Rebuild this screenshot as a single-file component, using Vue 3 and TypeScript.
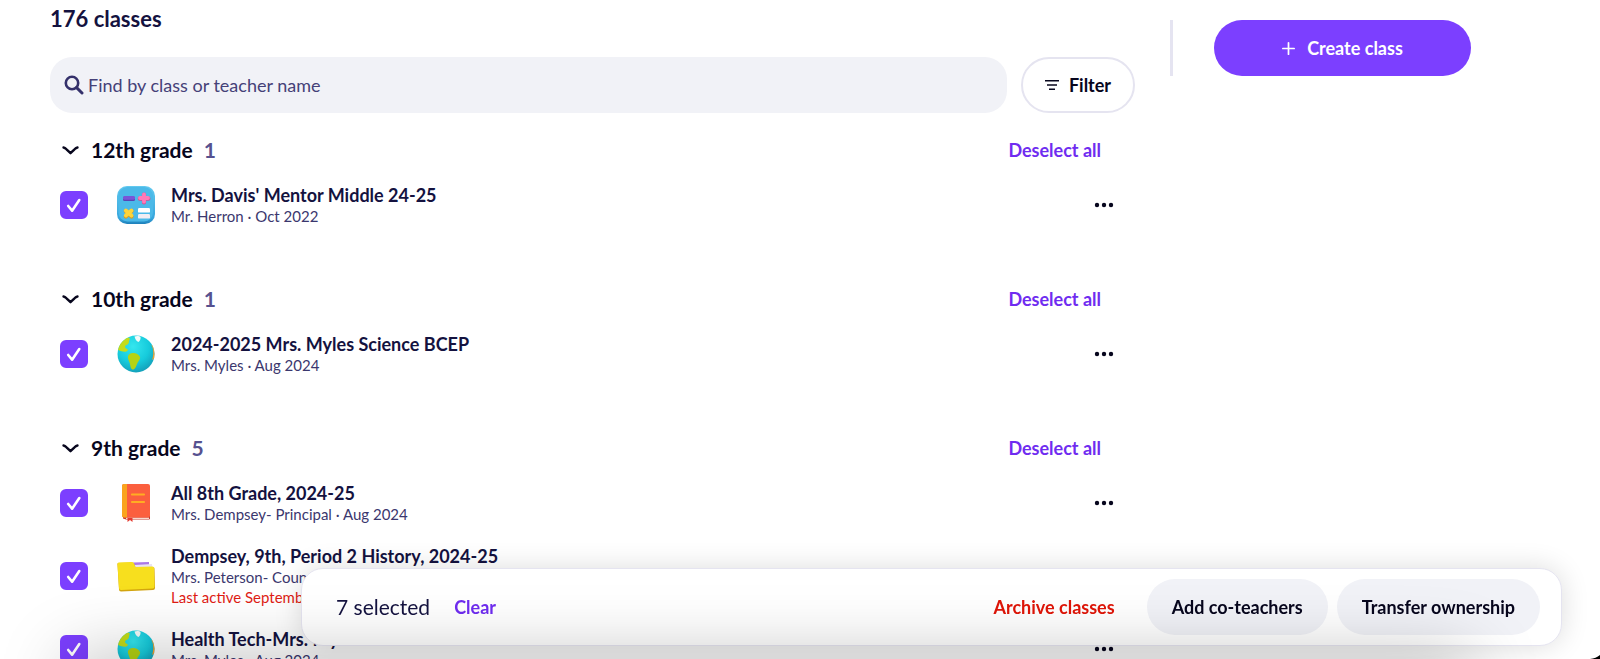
<script setup lang="ts">
import { computed, ref } from 'vue'

type IconName = 'math' | 'globe' | 'book' | 'folder'

interface ClassItem {
  id: number
  name: string
  icon: IconName
  detail: string
  warning?: string
}

interface Grade {
  name: string
  count: number
  open: boolean
  classes: ClassItem[]
}

const query = ref('')
const selectedTotal = ref(7)

const grades = ref<Grade[]>([
  {
    name: '12th grade',
    count: 1,
    open: true,
    classes: [{ id: 1, name: "Mrs. Davis' Mentor Middle 24-25", icon: 'math', detail: 'Mr. Herron · Oct 2022' }],
  },
  {
    name: '10th grade',
    count: 1,
    open: true,
    classes: [{ id: 2, name: '2024-2025 Mrs. Myles Science BCEP', icon: 'globe', detail: 'Mrs. Myles · Aug 2024' }],
  },
  {
    name: '9th grade',
    count: 5,
    open: true,
    classes: [
      { id: 3, name: 'All 8th Grade, 2024-25', icon: 'book', detail: 'Mrs. Dempsey- Principal · Aug 2024' },
      {
        id: 4,
        name: 'Dempsey, 9th, Period 2 History, 2024-25',
        icon: 'folder',
        detail: 'Mrs. Peterson- Counselor',
        warning: 'Last active September',
      },
      { id: 5, name: 'Health Tech-Mrs. Myles', icon: 'globe', detail: 'Mrs. Myles · Aug 2024' },
    ],
  },
])

const checked = ref<number[]>([1, 2, 3, 4, 5])
const selectedLabel = computed(() => `${selectedTotal.value} selected`)

function deselect(grade: Grade) {
  const ids = grade.classes.map((c) => c.id)
  checked.value = checked.value.filter((id) => !ids.includes(id))
  selectedTotal.value = Math.max(0, selectedTotal.value - grade.count)
}

function clear() {
  checked.value = []
  selectedTotal.value = 0
}
</script>

<template>
  <div class="page">
    <main class="main">
      <h1 class="title">176 classes</h1>

      <div class="tools">
        <label class="search">
          <svg class="search-icon" viewBox="0 0 20 20" aria-hidden="true">
            <circle cx="8" cy="8" r="6.2" fill="none" stroke="currentColor" stroke-width="2.6" />
            <path d="M12.6 12.6 18 18" stroke="currentColor" stroke-width="3" stroke-linecap="round" />
          </svg>
          <input v-model="query" type="text" placeholder="Find by class or teacher name" aria-label="Find by class or teacher name" />
        </label>
        <button type="button" class="pill filter">
          <svg class="filter-icon" viewBox="0 0 14 12" aria-hidden="true">
            <path d="M0 1.8h14M2 6h10M4 10.2h6" stroke="currentColor" stroke-width="1.5" />
          </svg>
          Filter
        </button>
      </div>

      <section v-for="grade in grades" :key="grade.name" class="grade">
        <header class="grade-head">
          <button type="button" class="toggle" :aria-expanded="grade.open" @click="grade.open = !grade.open">
            <svg class="chevron" viewBox="0 0 18 12" aria-hidden="true">
              <path d="M1.500 3.500q1.500.2 3 1.800L8.500 9.200l4-3.900q1.500-1.600 3-1.800" fill="none" stroke="currentColor" stroke-width="2.400" stroke-linecap="round" stroke-linejoin="round" />
            </svg>
            <span>{{ grade.name }}</span>
            <span class="count">{{ grade.count }}</span>
          </button>
          <button type="button" class="link" @click="deselect(grade)">Deselect all</button>
        </header>

        <ul v-if="grade.open" class="rows">
          <li v-for="item in grade.classes" :key="item.id" class="row">
            <span class="check">
              <input :id="`class-${item.id}`" v-model="checked" type="checkbox" :value="item.id" />
              <svg viewBox="0 0 28 28" aria-hidden="true">
                <path d="M8.200 15l3.900 4.700L19.300 9" fill="none" stroke="#fff" stroke-width="2.600" stroke-linecap="round" stroke-linejoin="round" />
              </svg>
            </span>

            <svg v-if="item.icon === 'math'" class="art" viewBox="0 0 38 38" aria-hidden="true">
              <defs>
                <linearGradient id="math-bg" x1="0" y1="0" x2="0" y2="1">
                  <stop offset="0" stop-color="#62c9ef" />
                  <stop offset=".85" stop-color="#36a5dc" />
                  <stop offset="1" stop-color="#1d80ba" />
                </linearGradient>
              </defs>
              <rect width="38" height="38" rx="10" fill="url(#math-bg)" />
              <rect x="1.500" y="1" width="34.500" height="34.500" rx="9" fill="#4bb9e8" />
              <rect x="6" y="10.500" width="12" height="4.500" rx="1.500" fill="#5942b4" />
              <rect x="6" y="10" width="12" height="3.800" rx="1.500" fill="#7955d8" />
              <path d="M27 8.500v8M22.800 12.700h8.600" stroke="#d64d8d" stroke-width="4.200" stroke-linecap="round" />
              <path d="M27 8.300v7.400M23 12h8" stroke="#ff7ab8" stroke-width="3.800" stroke-linecap="round" />
              <path d="m8.800 25 5.700 5.500m0-5.500-5.700 5.500" stroke="#d99b20" stroke-width="4.200" stroke-linecap="round" />
              <path d="m8.800 24.500 5.700 5m0-5-5.700 5" stroke="#fdd43a" stroke-width="3.800" stroke-linecap="round" />
              <rect x="21" y="22" width="12" height="4.600" rx="1.200" fill="#fff" />
              <rect x="21" y="28" width="12" height="4.600" rx="1.200" fill="#f2edf3" />
            </svg>

            <svg v-else-if="item.icon === 'globe'" class="art" viewBox="0 0 38 38" aria-hidden="true">
              <defs>
                <radialGradient id="sea" cx=".42" cy=".3" r=".72">
                  <stop offset="0" stop-color="#35e6ee" />
                  <stop offset=".6" stop-color="#16cbdc" />
                  <stop offset="1" stop-color="#149fb9" />
                </radialGradient>
                <clipPath id="ball"><circle cx="19" cy="19" r="18.500" /></clipPath>
              </defs>
              <circle cx="19" cy="19" r="18.500" fill="url(#sea)" />
              <g clip-path="url(#ball)">
                <path d="M4 6c2-2 4-3 7-3.500 1.500 0 2 .8 1.500 2L12 6.500c0 2-1 3-2.500 3.500-1.500.6-1.800 2-1 3 .5.700 2 .5 2.300 1.800.2 1-1.300 2-2.800 1.900C5 16.500 2 16 0 14Z" fill="#c4dc19" />
                <path d="M17.500 1.500c1.500-.8 5-.8 6 .3.400 2-.5 4.400-2 5.200-2-.5-3.500-3-4-5.500Z" fill="#f4fafa" />
                <path d="M11 21c1-2.500 3.500-3.500 6-3 3 .5 5.500 2 6.200 4.500-.2 2.500-2.200 4-3.200 6.500-1 2.800-2 5.500-4 5.500S13.500 32 13 29c-.4-2.500-2.600-5-2-8Z" fill="#b5d314" />
                <path d="M34.500 10c2 4 2.500 9 .5 15l4-3V10Z" fill="#f6a02c" />
              </g>
            </svg>

            <svg v-else-if="item.icon === 'book'" class="art" viewBox="0 0 38 38" aria-hidden="true">
              <path d="M6 32v2.500L9 35.500h23q1 0 1-1V5" fill="#c23b2d" />
              <path d="M9 33.500h23V35H9Z" fill="#f7d9ce" />
              <rect x="5" y="0" width="28" height="33.500" rx="2" fill="#fb5f3e" />
              <path d="M7 0h3v33.500H7q-2 0-2-2V2q0-2 2-2Z" fill="#faa41e" />
              <path d="M15 10.500h12M15 18h12" stroke="#ffad22" stroke-width="2.200" stroke-linecap="round" />
              <path d="M10.500 34v4l2.500-2 2.500 2v-4Z" fill="#e5382d" />
            </svg>

            <svg v-else class="art" viewBox="0 0 38 38" aria-hidden="true">
              <path d="M16 5.500 32 5v6H18Z" fill="#ab78e8" />
              <path d="m18 8 17-1 .500 6-17 1Z" fill="#e9e2f2" />
              <path d="M1 6 15 5.500q1.500 0 2 1.500l1.500 3.500 17.500-.5q1.500 0 1.500 1.500L38 31q0 2-2 2L4 34.500q-2 0-2-2L.5 8q-.5-1.500.5-2Z" fill="#d3a50f" />
              <path d="M1.500 5.500 15 5q1.500 0 2 1.500l1.500 3.500 17-.5q1.500 0 1.500 1.500l.5 18.500q0 2-2 2L4 33q-2 0-2-2L.5 7.500q0-1.500 1-2Z" fill="#f7df1e" />
            </svg>

            <label class="info" :for="`class-${item.id}`">
              <strong class="name">{{ item.name }}</strong>
              <span class="detail">{{ item.detail }}</span>
              <span v-if="item.warning" class="detail warning">{{ item.warning }}</span>
            </label>

            <button type="button" class="more" :aria-label="`Options for ${item.name}`">
              <svg viewBox="0 0 20 6" aria-hidden="true">
                <circle cx="3" cy="3" r="2.200" />
                <circle cx="10" cy="3" r="2.200" />
                <circle cx="17" cy="3" r="2.200" />
              </svg>
            </button>
          </li>
        </ul>
      </section>
    </main>

    <aside class="side">
      <div class="divider"></div>
      <button type="button" class="pill create">
        <svg class="plus" viewBox="0 0 12 12" aria-hidden="true">
          <path d="M6 .8v10.400M.8 6h10.400" stroke="currentColor" stroke-width="1.600" stroke-linecap="round" />
        </svg>
        Create class
      </button>
    </aside>

    <div class="bar" role="toolbar" aria-label="Selected classes">
      <span class="selected">{{ selectedLabel }}</span>
      <button type="button" class="link" @click="clear">Clear</button>
      <button type="button" class="link archive">Archive classes</button>
      <button type="button" class="pill soft">Add co-teachers</button>
      <button type="button" class="pill soft">Transfer ownership</button>
    </div>

    <div class="shade"></div>
    <svg class="corner" viewBox="0 0 10 4" aria-hidden="true">
      <path d="M0 4Q6 3.500 10 0v4Z" fill="#000" />
    </svg>
  </div>
</template>

<style>
body {
  margin: 0;
  background: #fff;
  overflow: hidden;
}
</style>

<style scoped>
.page {
  display: flex;
  align-items: flex-start;
  height: 100vh;
  overflow: hidden;
  padding-left: 50px;
  box-sizing: border-box;
  color: #14123f;
  font-family: Lato, "Open Sans", sans-serif;
  font-size: 18px;
  line-height: 22px;
}

button {
  border: 0;
  padding: 0;
  background: none;
  color: inherit;
  font: inherit;
  font-weight: 700;
  cursor: pointer;
}

.main {
  flex: 1;
  min-width: 0;
}

.title {
  margin: 5px 0 24px;
  font-size: 22px;
  line-height: 28px;
  font-weight: 700;
}

.tools {
  display: flex;
  gap: 14px;
}

.search {
  flex: 1;
  display: flex;
  align-items: center;
  gap: 4px;
  height: 56px;
  padding: 0 14px;
  box-sizing: border-box;
  border-radius: 22px;
  background: #f1f2f7;
  color: #35316b;
}

.search-icon {
  width: 20px;
  height: 20px;
}

.search input {
  flex: 1;
  border: 0;
  padding: 0;
  outline: 0;
  background: none;
  color: inherit;
  font: inherit;
}

.search input::placeholder {
  color: #454178;
  opacity: 1;
}

.pill {
  display: flex;
  align-items: center;
  justify-content: center;
  gap: 10px;
  height: 56px;
  border-radius: 28px;
  box-sizing: border-box;
  white-space: nowrap;
}

.filter {
  width: 114px;
  border: 2px solid #e5e4f0;
  background: #fff;
  color: #07061d;
}

.filter-icon {
  width: 14px;
  height: 12px;
}

.grade {
  margin-bottom: 40px;
}

.tools + .grade {
  margin-top: 19px;
}

.grade-head {
  display: flex;
  align-items: center;
  justify-content: space-between;
  height: 36px;
  padding: 0 34px 0 12px;
}

.toggle {
  display: flex;
  align-items: center;
  gap: 11px;
  color: #07061d;
  font-size: 21px;
  line-height: 28px;
}

.chevron {
  width: 18px;
  height: 12px;
}

.count {
  color: #56518f;
}

.link {
  color: #6f2cf0;
}

.rows {
  margin: 0;
  padding: 0;
  list-style: none;
}

.row {
  display: flex;
  align-items: center;
  height: 73px;
  padding: 0 21px 0 10px;
}

.check {
  display: grid;
  margin-right: 29px;
}

.check > * {
  grid-area: 1 / 1;
  width: 28px;
  height: 28px;
}

.check input {
  appearance: none;
  margin: 0;
  border: 2px solid #c9c6de;
  border-radius: 6px;
  background: #fff;
}

.check input:checked {
  border-color: #7c3fff;
  background: #7c3fff;
}

.check svg {
  pointer-events: none;
}

.art {
  width: 38px;
  height: 38px;
  margin-right: 16px;
  overflow: visible;
}

.info {
  flex: 1;
  display: flex;
  flex-direction: column;
}

.name {
  line-height: 22px;
}

.detail {
  color: #3b376e;
  font-size: 15px;
  line-height: 20px;
}

.warning {
  color: #df1c14;
}

.more {
  display: flex;
  align-items: center;
  height: 28px;
}

.more svg {
  width: 20px;
  height: 6px;
  fill: #07061d;
}

.side {
  display: flex;
  gap: 41px;
  margin: 20px 129px 0 35px;
}

.divider {
  width: 3px;
  background: #e5e4f1;
}

.create {
  width: 257px;
  gap: 12px;
  background: #7c3fff;
  color: #fff;
}

.plus {
  width: 13px;
  height: 13px;
}

.bar {
  position: fixed;
  left: 301px;
  right: 38px;
  bottom: 13px;
  display: flex;
  align-items: center;
  height: 78px;
  padding: 0 21px 0 34px;
  box-sizing: border-box;
  border: 1px solid #e5e4f0;
  border-radius: 22px;
  background: #fff;
  box-shadow: 0 0 28px rgba(0, 0, 0, 0.14);
}

.selected {
  margin-right: 24px;
  font-size: 21px;
  line-height: 28px;
}

.archive {
  margin-left: auto;
  margin-right: 32px;
  color: #e01508;
}

.soft {
  padding: 0 25px;
  background: #f1f2f7;
  color: #07061d;
}

.soft + .soft {
  margin-left: 9px;
}

.shade {
  position: fixed;
  left: 70px;
  right: 130px;
  bottom: -60px;
  height: 60px;
  box-shadow: 0 0 70px rgba(0, 0, 0, 0.28);
  pointer-events: none;
}

.corner {
  position: fixed;
  right: 0;
  bottom: 0;
  width: 10px;
  height: 4px;
  pointer-events: none;
}
</style>
